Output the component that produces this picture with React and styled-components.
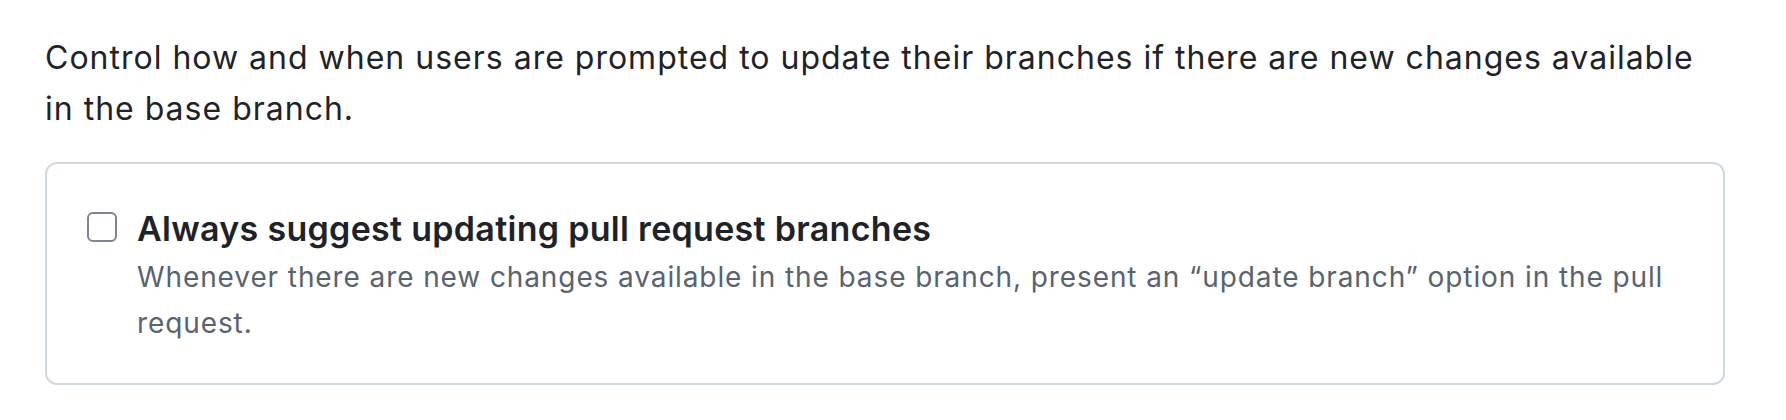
import React from "react";
import styled, { createGlobalStyle } from "styled-components";

const Global = createGlobalStyle`
  html, body { margin: 0; padding: 0; background: #ffffff; }
  body { font-family: Inter, "Noto Sans", sans-serif; color: #1f2328; }
`;

const Page = styled.div`
  padding: 32px 61px 0 45px;
`;

const Intro = styled.p`
  margin: 0 0 28px;
  font-size: 32px;
  line-height: 51px;
  letter-spacing: 1px;
  color: #1f2328;
`;

const Card = styled.div`
  border: 2px solid #d1d9e0;
  border-radius: 12px;
  padding: 46px 42px 37px 40px;
  display: flex;
  gap: 20px;
  align-items: flex-start;
`;

const Box = styled.input.attrs({ type: "checkbox" })`
  appearance: none;
  margin: 2px 0 0;
  width: 30px;
  height: 30px;
  flex: none;
  border: 2px solid #7d8590;
  border-radius: 6px;
  background: #fff;
`;

const Body = styled.div`
  display: flex;
  flex-direction: column;
`;

const Title = styled.label`
  font-size: 34px;
  font-weight: 600;
  line-height: 38px;
  letter-spacing: 0.3px;
  color: #1f2328;
`;

const Desc = styled.p`
  margin: 6px 0 0;
  font-size: 28px;
  line-height: 46px;
  letter-spacing: 0.9px;
  color: #59636e;
`;

export default function App() {
  return (
    <>
      <Global />
      <Page>
        <Intro>
          Control how and when users are prompted to update their branches if there are new changes available in the base branch.
        </Intro>
        <Card>
          <Box id="suggest" />
          <Body>
            <Title htmlFor="suggest">Always suggest updating pull request branches</Title>
            <Desc>
              Whenever there are new changes available in the base branch, present an “update branch” option in the pull request.
            </Desc>
          </Body>
        </Card>
      </Page>
    </>
  );
}
